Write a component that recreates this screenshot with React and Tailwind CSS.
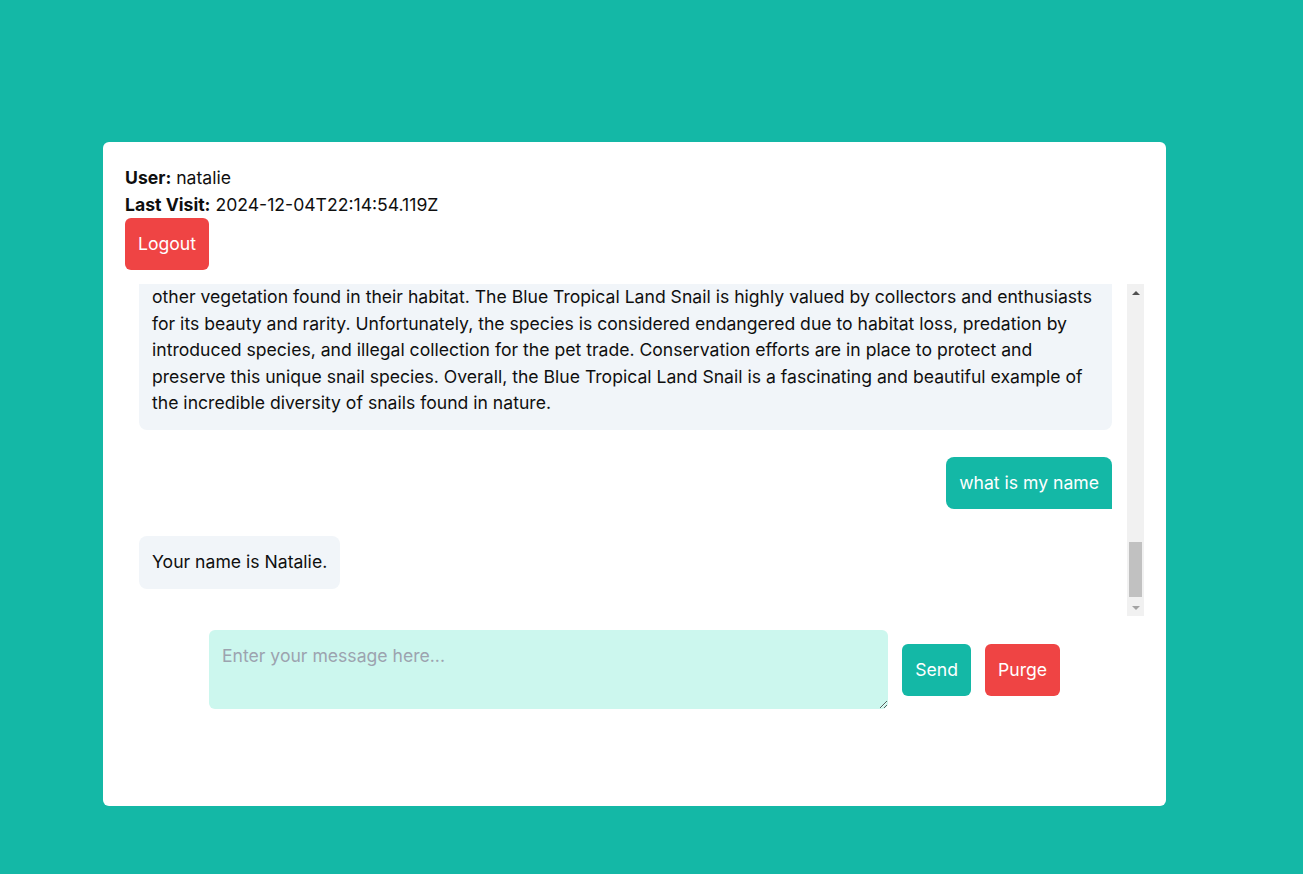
import React, { useEffect, useRef, useState } from 'react'

const intro =
  'The Blue Tropical Land Snail is a species of terrestrial gastropod native to the humid rainforests of the Caribbean and parts of Central America. It is named for the striking cobalt blue coloration of its shell, which can range from pale sky blue to a deep, almost iridescent sapphire depending on age and diet. Adult snails typically reach a shell diameter of three to four centimeters, and the shell is smooth, glossy and slightly flattened. The body of the snail is usually a soft grey or cream colour, and it has two pairs of tentacles, the upper pair carrying its eyes. These snails are mostly nocturnal and spend the day hidden under leaf litter, logs and rocks where the air is cool and moist. During the night they climb trees and shrubs and feed on decaying leaves, fungi, algae, fruits and'

const rest =
  'other vegetation found in their habitat. The Blue Tropical Land Snail is highly valued by collectors and enthusiasts for its beauty and rarity. Unfortunately, the species is considered endangered due to habitat loss, predation by introduced species, and illegal collection for the pet trade. Conservation efforts are in place to protect and preserve this unique snail species. Overall, the Blue Tropical Land Snail is a fascinating and beautiful example of the incredible diversity of snails found in nature.'

const initialMessages = [
  { id: 1, role: 'user', text: 'hello' },
  { id: 2, role: 'bot', text: 'Hello Natalie! How can I help you today?' },
  { id: 3, role: 'user', text: 'what is my name' },
  { id: 4, role: 'bot', text: 'Your name is Natalie.' },
  { id: 5, role: 'user', text: 'tell me about snails' },
  {
    id: 6,
    role: 'bot',
    text: 'Snails are gastropod mollusks with a coiled shell. They live on land, in fresh water and in the sea, and there are tens of thousands of species found all around the world.',
  },
  { id: 7, role: 'user', text: 'tell me about the blue tropical land snail' },
  { id: 8, role: 'bot', text: intro, tail: rest },
  { id: 9, role: 'user', text: 'what is my name' },
  { id: 10, role: 'bot', text: 'Your name is Natalie.' },
]

// classic scrollbar look for the chat list
const ScrollBar = () => (
  <div className="w-[17px] shrink-0 bg-[#f1f1f1] flex flex-col">
    <div className="h-[17px] flex items-center justify-center">
      <div className="w-0 h-0 border-x-[4px] border-x-transparent border-b-[4px] border-b-[#505050]" />
    </div>
    <div className="flex-1 flex flex-col justify-end pb-[2px]">
      <div className="h-[55px] mx-[2px] bg-[#c1c1c1]" />
    </div>
    <div className="h-[17px] flex items-center justify-center">
      <div className="w-0 h-0 border-x-[4px] border-x-transparent border-t-[4px] border-t-[#a3a3a3]" />
    </div>
  </div>
)

const App = () => {
  const [messages] = useState(initialMessages)
  const [input, setInput] = useState('')
  const listRef = useRef(null)

  // keep the chat scrolled to the newest message
  useEffect(() => {
    if (listRef.current) listRef.current.scrollTop = listRef.current.scrollHeight
  }, [messages])

  return (
    <div className="min-h-screen bg-[#14b8a6] pt-[142px] pl-[103px] font-['Inter',sans-serif] text-[17.6px] text-[#0f0f0f]">
      <div className="w-[1063px] h-[664px] bg-white rounded-md p-[22px] flex flex-col">

        {/* User info */}
        <div className="leading-[27px]">
          <p><span className="font-bold">User:</span> natalie</p>
          <p><span className="font-bold">Last Visit:</span> 2024-12-04T22:14:54.119Z</p>
        </div>
        <div>
          <button className="bg-[#ef4444] text-white px-[13px] py-[13px] leading-[26px] rounded-md">
            Logout
          </button>
        </div>

        {/* Chat messages */}
        <div className="mt-3.5 h-[332px] flex">
          <div
            ref={listRef}
            className="flex-1 overflow-hidden pl-3.5 pr-[15px] pt-3.5 pb-[27px] flex flex-col gap-[27px]"
          >
            {messages.map((msg) =>
              msg.role === 'user' ? (
                <div key={msg.id} className="flex justify-end">
                  <div className="bg-[#14b8a6] text-white px-[13px] py-[13px] leading-[26.4px] rounded-lg rounded-br-none">
                    {msg.text}
                  </div>
                </div>
              ) : (
                <div key={msg.id} className="flex justify-start">
                  <div className="bg-[#f1f5f9] px-[13px] py-[13px] leading-[26.5px] rounded-lg">
                    {msg.text}
                    {msg.tail && (
                      <>
                        <br />
                        {msg.tail}
                      </>
                    )}
                  </div>
                </div>
              )
            )}
          </div>
          <ScrollBar />
        </div>

        {/* Input row */}
        <div className="mt-3.5 flex items-center justify-center gap-3.5">
          <textarea
            value={input}
            onChange={(e) => setInput(e.target.value)}
            placeholder="Enter your message here..."
            className="w-2/3 h-[79px] bg-[#ccf7ee] rounded-md p-[13px] leading-[26px] placeholder-[#9ca3af] outline-none"
          />
          <button className="bg-[#14b8a6] text-white px-[13px] py-[13px] leading-[26px] rounded-md">
            Send
          </button>
          <button className="bg-[#ef4444] text-white px-[13px] py-[13px] leading-[26px] rounded-md">
            Purge
          </button>
        </div>
      </div>
    </div>
  )
}

export default App
